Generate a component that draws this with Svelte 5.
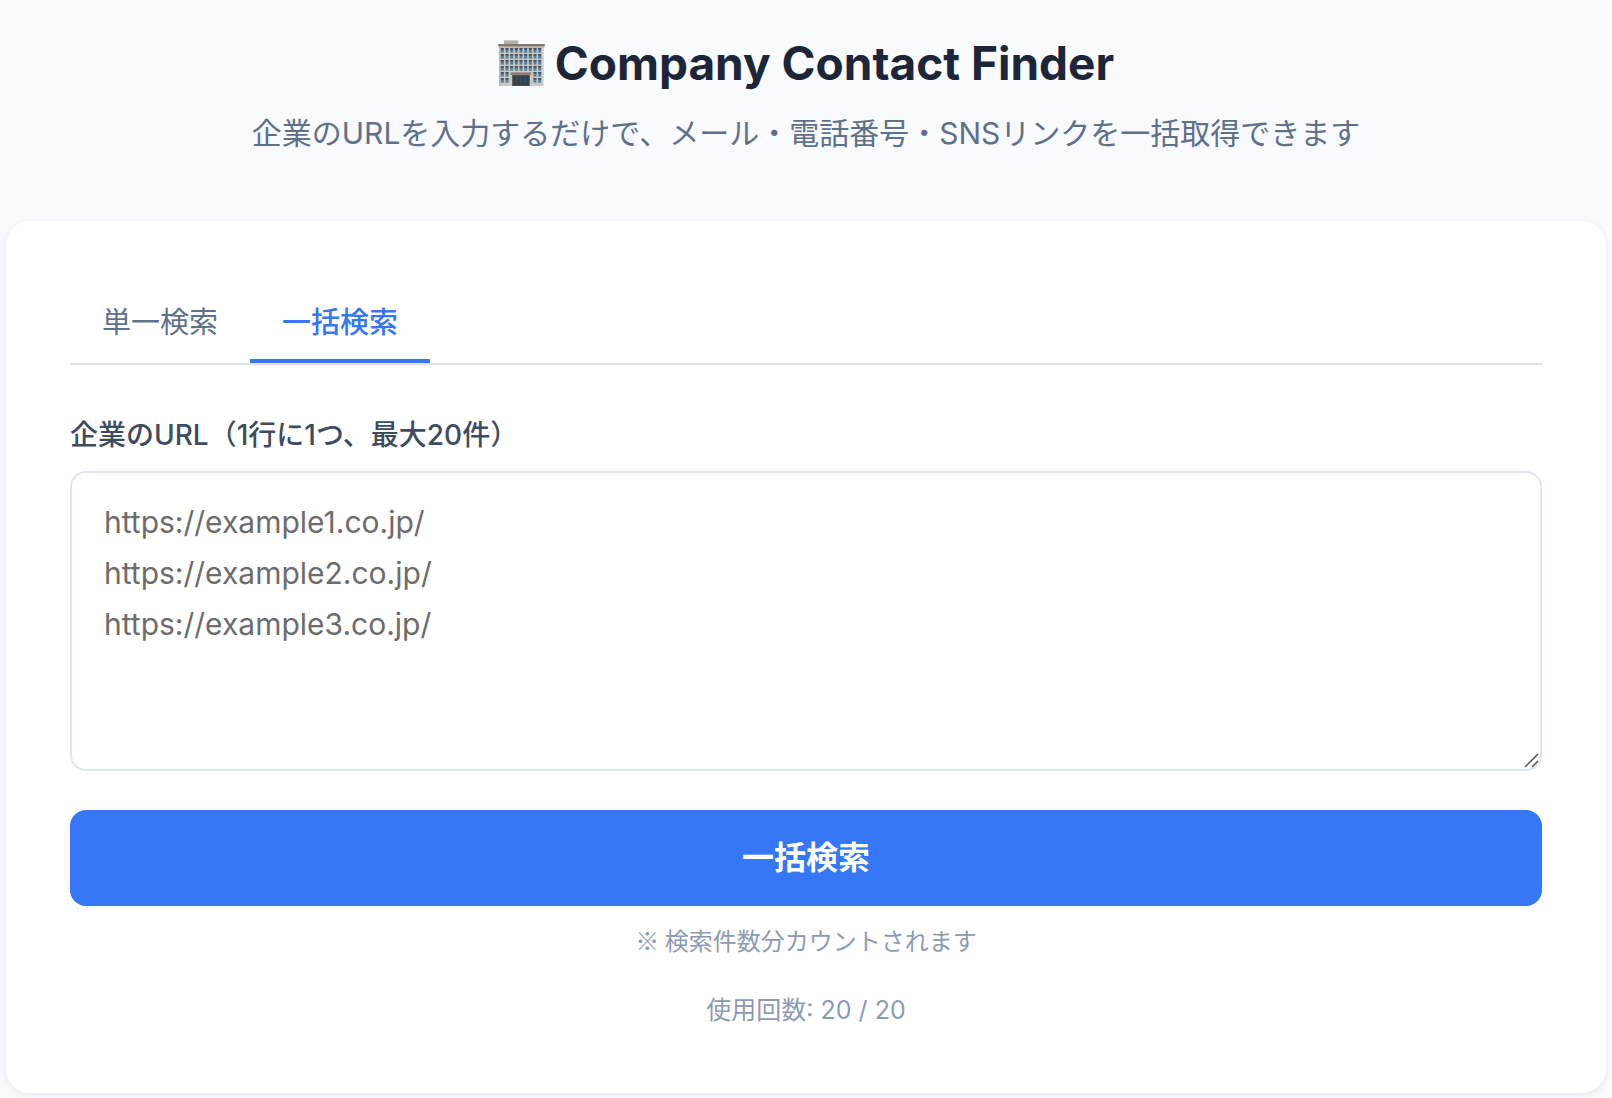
<script>
  // ── State ─────────────────────────────────────────────────────────────────
  let mode = $state('bulk');
  let singleUrl = $state('');
  let bulkUrls = $state('');

  const used = 20;
  const limit = 20;

  const tabs = [
    { id: 'single', label: '単一検索' },
    { id: 'bulk',   label: '一括検索' },
  ];

  const placeholder = [1, 2, 3].map((n) => `https://example${n}.co.jp/`).join('\n');

  // ── Building icon ─────────────────────────────────────────────────────────
  // 9 columns x 6 rows, the two lower rows leave room for the entrance
  const panes = [];
  for (let row = 0; row < 6; row++) {
    for (let col = 0; col < 9; col++) {
      if (row > 3 && col > 1 && col < 7) continue;
      panes.push({ x: 8 + col * 14, y: 24 + row * 18 });
    }
  }

  let submitLabel = $derived(mode === 'bulk' ? '一括検索' : '検索');
</script>

<div class="page">
  <header class="header">
    <h1>
      <svg class="building" viewBox="0 0 140 138" aria-hidden="true">
        <rect x="17" y="0" width="43" height="13" fill="#b5b2ad"/>
        <rect x="17" y="0" width="43" height="3" fill="#c9c6c1"/>
        <rect x="3" y="18" width="134" height="120" fill="#cbc6c1"/>
        <rect x="3" y="18" width="4" height="120" fill="#b9b5b0"/>
        <rect x="133" y="18" width="4" height="120" fill="#dedad5"/>
        <rect x="0" y="12" width="140" height="7" fill="#82776e"/>
        <rect x="2" y="19" width="136" height="3" fill="#aaa39c"/>
        {#each panes as pane}
          <rect x={pane.x} y={pane.y} width="9" height="14" fill="#5b8099"/>
          <rect x={pane.x} y={pane.y} width="9" height="5" fill="#3c566d"/>
        {/each}
        <rect x="37" y="97" width="62" height="8" fill="#8b8078"/>
        <rect x="42" y="105" width="53" height="33" fill="#514f50"/>
        <rect x="45" y="108" width="9" height="28" fill="#2d4352"/>
        <rect x="57" y="108" width="10" height="28" fill="#2d4352"/>
        <rect x="70" y="108" width="10" height="28" fill="#2d4352"/>
        <rect x="83" y="108" width="9" height="28" fill="#2d4352"/>
      </svg>
      <span>Company Contact Finder</span>
    </h1>
    <p class="lead">企業のURLを入力するだけで、メール・電話番号・SNSリンクを一括取得できます</p>
  </header>

  <main class="card">
    <div class="tabs" role="tablist">
      {#each tabs as tab}
        <button
          type="button"
          role="tab"
          class="tab"
          class:active={mode === tab.id}
          aria-selected={mode === tab.id}
          onclick={() => mode = tab.id}
        >{tab.label}</button>
      {/each}
    </div>

    <form onsubmit={(e) => e.preventDefault()}>
      {#if mode === 'bulk'}
        <label for="urls">企業のURL（1行に1つ、最大20件）</label>
        <div class="field">
          <textarea id="urls" {placeholder} bind:value={bulkUrls}></textarea>
          <svg class="grip" viewBox="0 0 16 16" aria-hidden="true">
            <path d="M1 14 14 1M8 14l6-6" fill="none" stroke="#5c5c5c" stroke-width="1.6"/>
          </svg>
        </div>
      {:else}
        <label for="url">企業のURL</label>
        <div class="field">
          <input id="url" type="url" placeholder="https://example.co.jp/" bind:value={singleUrl} />
        </div>
      {/if}

      <button type="submit" class="submit">{submitLabel}</button>
    </form>

    {#if mode === 'bulk'}
      <p class="note">※ 検索件数分カウントされます</p>
    {/if}
    <p class="usage">使用回数: {used} / {limit}</p>
  </main>
</div>

<style>
  :global(body) {
    background: #f8fafd;
  }

  .page {
    padding: 26px 6px 5px;
    font-family: Inter, "Noto Sans CJK JP", sans-serif;
    color: #1e293b;
  }

  /* ── Header ───────────────────────────────────────────────────────────────── */
  .header {
    margin-bottom: 62px;
    text-align: center;
  }

  h1 {
    display: flex;
    align-items: center;
    justify-content: center;
    gap: 10px;
    margin: 0 0 8px;
    font-size: 46px;
    line-height: 74px;
    font-weight: 700;
    color: #1d2638;
  }

  .building {
    width: 47px;
    height: 46px;
  }

  .lead {
    margin: 0;
    font-size: 30px;
    line-height: 51px;
    color: #5f7089;
  }

  /* ── Card ─────────────────────────────────────────────────────────────────── */
  .card {
    padding: 64px;
    background: #fff;
    border-radius: 24px;
    box-shadow: 0 2px 6px rgba(15, 23, 42, 0.08);
  }

  .tabs {
    display: flex;
    margin-bottom: 48px;
    border-bottom: 2px solid #dde3ee;
  }

  .tab {
    padding: 16px 32px 14px;
    border: 0;
    border-bottom: 4px solid transparent;
    background: none;
    font-family: inherit;
    font-size: 29px;
    line-height: 44px;
    font-weight: 400;
    color: #5f7089;
    cursor: pointer;
  }
  .tab.active {
    font-weight: 500;
    color: #3577f5;
    border-bottom-color: #3577f5;
  }

  /* ── Form ─────────────────────────────────────────────────────────────────── */
  label {
    display: block;
    margin-bottom: 14px;
    font-size: 28px;
    line-height: 44px;
    font-weight: 500;
    color: #3e4c60;
  }

  .field {
    position: relative;
    display: flex;
    margin-bottom: 39px;
  }

  textarea, input {
    box-sizing: border-box;
    width: 100%;
    padding: 24px 32px;
    border: 2px solid #dfe6ef;
    border-radius: 16px;
    background: #fff;
    font-family: inherit;
    font-size: 30px;
    line-height: 51px;
    color: #1e293b;
  }
  textarea {
    height: 300px;
    resize: vertical;
  }
  textarea::-webkit-resizer { display: none; }
  textarea::placeholder, input::placeholder { color: #6c6c6c; }
  textarea:focus, input:focus {
    outline: none;
    border-color: #3577f5;
  }

  .grip {
    position: absolute;
    right: 2px;
    bottom: 2px;
    width: 16px;
    height: 16px;
    pointer-events: none;
  }

  .submit {
    display: block;
    width: 100%;
    padding: 24px;
    border: 0;
    border-radius: 16px;
    background: #3577f5;
    font-family: inherit;
    font-size: 32px;
    line-height: 48px;
    font-weight: 700;
    color: #fff;
    cursor: pointer;
  }
  .submit:hover { background: #2866e3; }

  /* ── Footer text ──────────────────────────────────────────────────────────── */
  .note, .usage {
    margin: 0;
    text-align: center;
    color: #8c9bb2;
  }
  .note {
    margin-top: 15px;
    font-family: "Noto Sans CJK JP", sans-serif;
    font-size: 24px;
    line-height: 38px;
  }
  .usage {
    margin-top: 32px;
    font-size: 25px;
    line-height: 38px;
  }
</style>
